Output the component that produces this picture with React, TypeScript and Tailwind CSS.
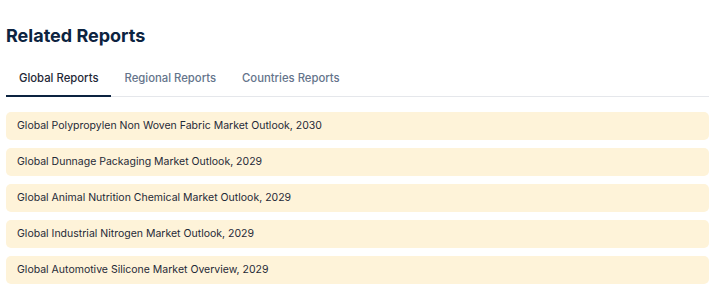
import React, { useState } from 'react';

const tabs = ['Global Reports', 'Regional Reports', 'Countries Reports'];

const reports = [
  'Global Polypropylen Non Woven Fabric Market Outlook, 2030',
  'Global Dunnage Packaging Market Outlook, 2029',
  'Global Animal Nutrition Chemical Market Outlook, 2029',
  'Global Industrial Nitrogen Market Outlook, 2029',
  'Global Automotive Silicone Market Overview, 2029',
];

const App: React.FC = () => {
  const [active, setActive] = useState(0);

  return (
    <div className="min-h-screen bg-white pl-[6px] pr-[12px] pt-[23px]" style={{ fontFamily: 'Inter, "Noto Sans", sans-serif' }}>
      <h2 className="text-[18px] leading-[26px] font-bold text-[#0c2340]">Related Reports</h2>

      <div className="mt-[19px] flex border-b border-[#e5e7eb]">
        {tabs.map((t, i) => (
          <button
            key={t}
            onClick={() => setActive(i)}
            className={`px-[13px] pt-[2px] pb-[9px] text-[11.3px] leading-[16px] font-medium -mb-px border-b-2 ${
              active === i ? 'border-[#0c2340] text-[#1f2937]' : 'border-transparent text-[#64748b]'
            }`}
          >
            {t}
          </button>
        ))}
      </div>

      <div className="mt-[15px] flex flex-col gap-[8px]">
        {reports.map(r => (
          <div key={r} className="h-[28px] flex items-center px-[11px] rounded-[5px] bg-[#fef3d9] text-[10.5px] text-[#1f2937]">
            {r}
          </div>
        ))}
      </div>
    </div>
  );
};

export default App;
